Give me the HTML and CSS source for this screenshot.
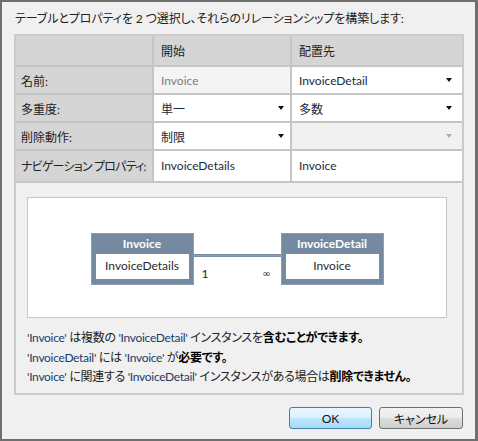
FILE: index.html
```html
<!DOCTYPE html>
<html lang="ja">
<head>
<meta charset="utf-8">
<title>関係の構築</title>
<link rel="stylesheet" href="styles.css">
</head>
<body>
<div class="window">
  <div class="title">テーブルとプロパティを 2 つ選択し、それらのリレーションシップを構築します:</div>
  <div class="group">
    <div class="grid">
      <div class="cell head"></div>
      <div class="cell head">開始</div>
      <div class="cell head">配置先</div>

      <div class="cell label">名前:</div>
      <div class="cell readonly">Invoice</div>
      <div class="cell value combo dest">InvoiceDetail<span class="arrow"></span></div>

      <div class="cell label">多重度:</div>
      <div class="cell value combo">単一<span class="arrow"></span></div>
      <div class="cell value combo dest">多数<span class="arrow"></span></div>

      <div class="cell label">削除動作:</div>
      <div class="cell value combo">制限<span class="arrow"></span></div>
      <div class="cell disabled combo dest"><span></span><span class="arrow light"></span></div>

      <div class="cell label nav tight">ナビゲーション プロパティ:</div>
      <div class="cell value nav">InvoiceDetails</div>
      <div class="cell value nav">Invoice</div>
    </div>

    <div class="diagram">
      <div class="entity">
        <div class="entity-title">Invoice</div>
        <div class="entity-body">InvoiceDetails</div>
      </div>
      <div class="link">
        <div class="link-line"></div>
        <div class="link-labels"><span>1</span><span class="inf">∞</span></div>
      </div>
      <div class="entity">
        <div class="entity-title">InvoiceDetail</div>
        <div class="entity-body">Invoice</div>
      </div>
    </div>

    <div class="notes">
      <p><span class="name">'Invoice'</span> は複数の <span class="name">'InvoiceDetail'</span> インスタンスを<b>含むことができます。</b></p>
      <p><span class="name">'InvoiceDetail'</span> には <span class="name">'Invoice'</span> が<b>必要です。</b></p>
      <p><span class="name">'Invoice'</span> に関連する <span class="name">'InvoiceDetail'</span> インスタンスがある場合は<b>削除できません。</b></p>
    </div>
  </div>
  <div class="buttons">
    <button class="btn primary">OK</button>
    <button class="btn">キャンセル</button>
  </div>
</div>
</body>
</html>
```

FILE: styles.css
```css
* { box-sizing: border-box; }
html, body {
  margin: 0;
  padding: 0;
  background: #f0f0f0;
}
body {
  font-family: Lato, "Noto Sans CJK JP", sans-serif;
  font-size: 12px;
  color: #1e1e1e;
  font-feature-settings: "palt";
}
.window {
  width: 478px;
  height: 441px;
  background: #f0f0f0;
  border: 2px solid #6f6f6f;
  border-right-width: 3px;
  padding: 7px 11px 0 12px;
  display: flex;
  flex-direction: column;
}
.title {
  height: 20px;
  line-height: 20px;
  padding-left: 1px;
  color: #222;
  margin-bottom: 5px;
  letter-spacing: -0.1px;
}
.group {
  height: 361px;
  border: 2px solid #cbcbcb;
  display: flex;
  flex-direction: column;
}
.grid {
  display: grid;
  grid-template-columns: 136px 136px 170px;
  grid-template-rows: 29px 26px 26px 26px 30px;
  gap: 2px;
  background: #c5c5c5;
  padding-bottom: 2px;
  width: 446px;
}
.cell {
  display: flex;
  align-items: center;
  padding: 0 6px 0 5px;
  white-space: nowrap;
}
.head, .label { background: #d5d5d5; color: #222; }
.head { padding-left: 7px; }
.tight { letter-spacing: -0.8px; }
.readonly { background: #f4f4f4; color: #7d7d7d; padding-left: 7px; }
.value { background: #ffffff; color: #1e2a3a; padding-left: 7px; }
.disabled { background: #f1f1f1; }
.combo { justify-content: space-between; padding-right: 6px; }
.combo.dest { padding-right: 10px; }
.arrow {
  width: 0;
  height: 0;
  border-left: 3.5px solid transparent;
  border-right: 3.5px solid transparent;
  border-top: 4px solid #111;
}
.arrow.light { border-top-color: #a5adb8; }
.nav { padding-bottom: 1px; }

.diagram {
  margin: 14px 0 0 11px;
  width: 420px;
  height: 121px;
  background: #ffffff;
  border: 1px solid #c6c6c6;
  display: flex;
  justify-content: center;
  align-items: flex-start;
  padding-top: 35px;
}
.entity {
  width: 103px;
  height: 52px;
  background: #758aa1;
  border: 1px solid #8c9db0;
  padding: 0 4px 5px;
  display: flex;
  flex-direction: column;
}
.entity-title {
  height: 20px;
  line-height: 20px;
  text-align: center;
  color: #ffffff;
  font-weight: bold;
}
.entity-body {
  flex: 1;
  background: #ffffff;
  text-align: center;
  line-height: 24px;
  color: #2a2a2a;
}
.link {
  width: 87px;
  height: 52px;
  display: flex;
  flex-direction: column;
}
.link-line {
  margin-top: 21px;
  height: 3px;
  background: #8a9db1;
  border-top: 1px solid #7a8ea5;
  border-bottom: 1px solid #7a8ea5;
}
.link-labels {
  display: flex;
  justify-content: space-between;
  align-items: center;
  padding: 0 10px 0 8px;
  margin-top: 8px;
  height: 16px;
  color: #222;
}
.inf { font-size: 10px; font-family: "DejaVu Sans", sans-serif; }

.notes {
  margin: 10px 0 0 11px;
  letter-spacing: -0.3px;
}
.notes p {
  margin: 0;
  height: 19.5px;
  line-height: 19.5px;
  white-space: nowrap;
  color: #222;
}
.notes .name { color: #1d3b6b; }
.notes b { color: #000; font-weight: bold; }

.buttons {
  display: flex;
  justify-content: flex-end;
  gap: 7px;
  margin-top: 12px;
  padding-right: 1px;
}
.btn {
  font-family: Lato, "Noto Sans CJK JP", sans-serif;
  font-feature-settings: "palt";
  font-size: 12px;
  width: 84px;
  height: 22px;
  padding: 0;
  border-radius: 3px;
  border: 1px solid #707070;
  background: linear-gradient(#f2f2f2 0%, #ebebeb 50%, #dddddd 51%, #cfcfcf 100%);
  color: #111;
}
.btn.primary {
  width: 83px;
  border-color: #3c7fb1;
  background: linear-gradient(#eaf6fd 0%, #d9f0fc 50%, #bee6fd 51%, #a7d9f5 100%);
}
```
